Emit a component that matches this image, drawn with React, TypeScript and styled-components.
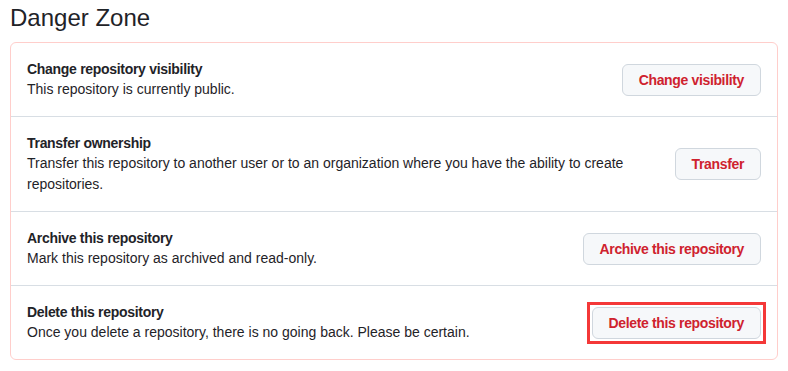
import React from 'react';
import styled, { createGlobalStyle } from 'styled-components';

const GlobalStyle = createGlobalStyle`
  body {
    margin: 0;
    background: #ffffff;
    font-family: 'Liberation Sans', Arial, sans-serif;
    color: #1f2328;
  }
`;

interface DangerItem {
  title: string;
  description: string;
  action: string;
  highlighted?: boolean;
}

const items: DangerItem[] = [
  {
    title: 'Change repository visibility',
    description: 'This repository is currently public.',
    action: 'Change visibility',
  },
  {
    title: 'Transfer ownership',
    description:
      'Transfer this repository to another user or to an organization where you have the ability to create repositories.',
    action: 'Transfer',
  },
  {
    title: 'Archive this repository',
    description: 'Mark this repository as archived and read-only.',
    action: 'Archive this repository',
  },
  {
    title: 'Delete this repository',
    description: 'Once you delete a repository, there is no going back. Please be certain.',
    action: 'Delete this repository',
    highlighted: true,
  },
];

export default function App() {
  return (
    <>
      <GlobalStyle />
      <Page>
        <Heading>Danger Zone</Heading>
        <DangerBox>
          {items.map((item) => {
            const button = <DangerButton>{item.action}</DangerButton>;
            return (
              <Row key={item.title}>
                <RowText>
                  <RowTitle>{item.title}</RowTitle>
                  <RowDescription>{item.description}</RowDescription>
                </RowText>
                {item.highlighted ? <Highlight>{button}</Highlight> : button}
              </Row>
            );
          })}
        </DangerBox>
      </Page>
    </>
  );
}

const Page = styled.div`
  padding: 0 10px;
`;

const Heading = styled.h2`
  margin: 0 0 6px 0;
  font-size: 24px;
  line-height: 36px;
  font-weight: 400;
  color: #1f2328;
`;

const DangerBox = styled.div`
  border: 1px solid #ffcecb;
  border-radius: 6px;
`;

const Row = styled.div`
  display: flex;
  align-items: center;
  justify-content: space-between;
  gap: 16px;
  padding: 16px;
  border-top: 1px solid #d8dee4;

  &:first-child {
    border-top: none;
  }
`;

const RowText = styled.div`
  flex: 1;
  font-size: 14px;
`;

const RowTitle = styled.div`
  font-weight: 600;
  line-height: 20px;
  letter-spacing: -0.3px;
  color: #1f2328;
`;

const RowDescription = styled.div`
  font-weight: 400;
  line-height: 21px;
`;

const Highlight = styled.span`
  display: inline-flex;
  flex-shrink: 0;
  margin: -5px;
  padding: 2px;
  border: 3px solid #f43838;
`;

const DangerButton = styled.button`
  flex-shrink: 0;
  height: 32px;
  padding: 0 16px;
  font-family: inherit;
  font-size: 14px;
  font-weight: 600;
  letter-spacing: -0.35px;
  line-height: 20px;
  color: #cf222e;
  background: #f6f8fa;
  border: 1px solid #d0d7de;
  border-radius: 6px;
  cursor: pointer;
`;
